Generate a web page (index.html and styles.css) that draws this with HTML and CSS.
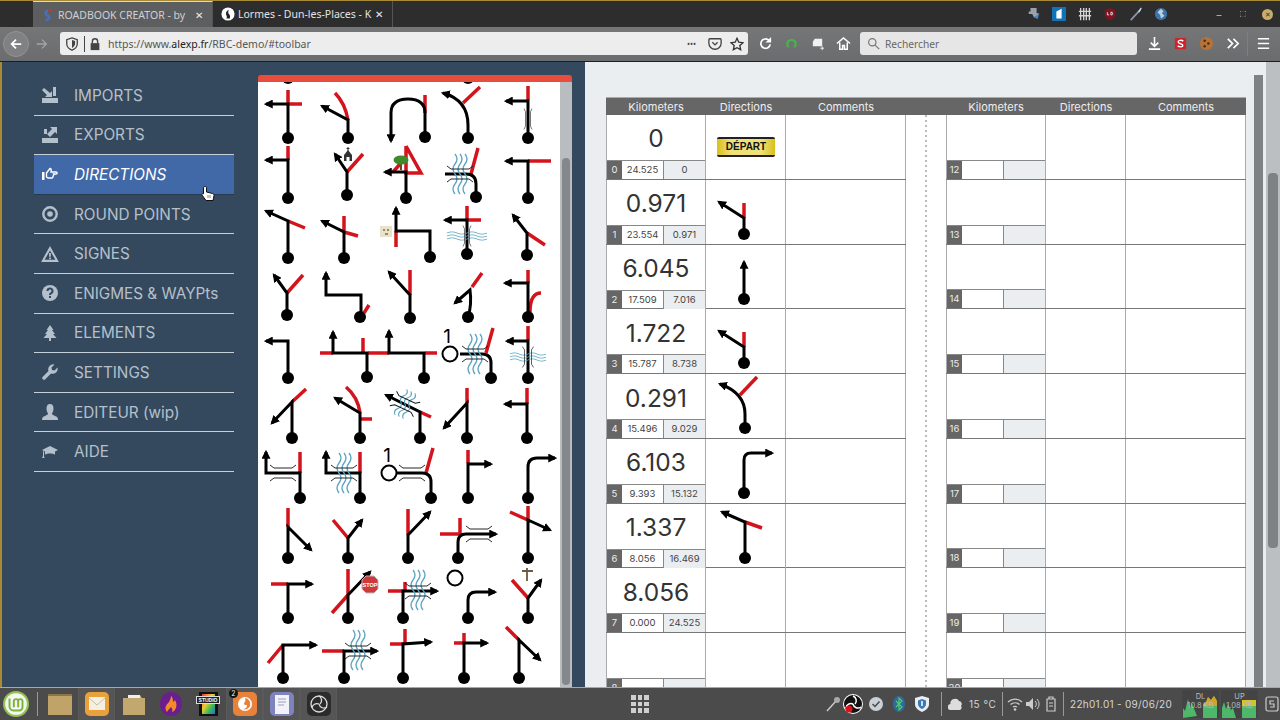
FILE: index.html
```html
<!DOCTYPE html>
<html lang="fr">
<head>
    <meta charset="UTF-8">
    <title>ROADBOOK CREATOR</title>
    <link rel="stylesheet" href="styles.css">
</head>
<body>
<div class="screen">

    <!-- browser window: tabs -->
    <div class="titlebar">
        <div class="tab tab-active">
            <svg class="favicon" viewBox="0 0 16 16"><path d="M8 1h4v3H9z" fill="#c33"/><path d="M8 3c-4 1-3 5 0 6 3 1 2 4-3 5" fill="none" stroke="#4a6fb5" stroke-width="3"/></svg>
            <span class="tab-label">ROADBOOK CREATOR - by</span>
            <span class="tab-close">✕</span>
        </div>
        <div class="tab">
            <svg class="favicon" viewBox="0 0 16 16"><circle cx="8" cy="8" r="7.500" fill="#fff"/><path d="M9 3C6 4 5 7 6 9s1 3 0 4h4c1-2 0-4-1-5s-1-3 0-5z" fill="#222"/></svg>
            <span class="tab-label">Lormes - Dun-les-Places - K</span>
            <span class="tab-close">✕</span>
        </div>
        <div class="ext-icons">
            <svg viewBox="0 0 16 16"><path d="M4 1h7v6h3l-4 5H8L6 8H2V5h2z" fill="#9aa3ad"/><path d="M8 11l6-3-2 6z" fill="#4a86c5"/></svg>
            <svg viewBox="0 0 16 16"><path d="M0 0h16v16H0z" fill="#1272b8"/><path d="M5 5l6-3v11H5z" fill="#fff"/></svg>
            <svg viewBox="0 0 16 16"><path d="M3 1v14M6.500 1v14M9.500 1v14M13 1v14M1 5h14M1 10h14" stroke="#d5d5d5" stroke-width="1.500"/></svg>
            <svg viewBox="0 0 16 16"><path d="M8 1l6 2v6c0 3-3 5-6 6-3-1-6-3-6-6V3z" fill="#7f1420"/><path d="M5 6v3h2M9 6v3h1.500l.5-1.500L10.500 6z" fill="none" stroke="#eee"/></svg>
            <svg viewBox="0 0 16 16"><path d="M2 15L13 3" stroke="#8b95a8" stroke-width="2"/><path d="M11 6l3-5" stroke="#d5d9e0" stroke-width="1.500"/></svg>
            <svg viewBox="0 0 16 16"><circle cx="8" cy="8" r="7" fill="#3f73a8"/><path d="M4 6l4-4 3 3-2 2 3 3-4 3-1-4z" fill="#b9cfe2"/></svg>
        </div>
        <div class="window-btns">
            <span class="win-min"></span>
            <span class="win-max"></span>
            <span class="win-close">✕</span>
        </div>
    </div>

    <!-- browser window: toolbar -->
    <div class="navbar">
        <button class="back-btn"><svg viewBox="0 0 16 16"><path d="M14 8H3M8 3L3 8l5 5" fill="none" stroke="#fff" stroke-width="2"/></svg></button>
        <span class="forward-btn"><svg viewBox="0 0 16 16"><path d="M2 8h11M8 3l5 5-5 5" fill="none" stroke="#a4a5a7" stroke-width="1.500"/></svg></span>
        <div class="urlbar">
            <svg class="url-icon" viewBox="0 0 16 16"><path d="M8 1l6 2v5c0 3-3 6-6 7-3-1-6-4-6-7V3z" fill="none" stroke="#444" stroke-width="1.500"/><path d="M8 3.500l3.500 1v3.500c0 2-2 3.500-3.500 4.500z" fill="#444"/></svg>
            <span class="url-sep"></span>
            <svg class="url-icon" viewBox="0 0 16 16"><path d="M5 7V5a3 3 0 0 1 6 0v2" fill="none" stroke="#444" stroke-width="1.600"/><path d="M3 7h10v8H3z" fill="#444"/></svg>
            <span class="url-text">https://www.<b>alexp.fr</b>/RBC-demo/#toolbar</span>
            <span class="url-dots">•••</span>
            <svg class="url-icon" viewBox="0 0 16 16"><path d="M2 2h12a1 1 0 0 1 1 1v4a7 7 0 0 1-14 0V3a1 1 0 0 1 1-1z" fill="none" stroke="#444" stroke-width="1.500"/><path d="M5 6l3 3 3-3" fill="none" stroke="#444" stroke-width="1.500"/></svg>
            <svg class="url-icon" viewBox="0 0 16 16"><path d="M8 1.500l2 4.500 4.800.5-3.600 3.200 1 4.800L8 12.200 3.800 14.500l1-4.800L1.200 6.500 6 6z" fill="none" stroke="#333" stroke-width="1.500"/></svg>
        </div>
        <span class="nav-icon"><svg viewBox="0 0 16 16"><path d="M13 9a5 5 0 1 1-1.500-4.500L13 6" fill="none" stroke="#fff" stroke-width="1.800"/><path d="M14 1v6H8z" fill="#fff"/></svg></span>
        <span class="nav-icon"><svg viewBox="0 0 16 16"><path d="M5 12a4.500 4.500 0 1 1 6 0" fill="none" stroke="#4caf50" stroke-width="2.500"/></svg></span>
        <span class="nav-icon"><svg viewBox="0 0 16 16"><path d="M5 3h8v8H3V6z" fill="#f1f1f1"/><path d="M13 11v4M11 13h4" stroke="#f1f1f1"/></svg></span>
        <span class="nav-icon"><svg viewBox="0 0 16 16"><path d="M1 8l7-6 7 6M4 7v7h3v-4h2v4h3V7" fill="none" stroke="#fff" stroke-width="1.600"/></svg></span>
        <div class="searchbar">
            <svg viewBox="0 0 16 16"><circle cx="6.500" cy="6.500" r="4.500" fill="none" stroke="#777" stroke-width="1.500"/><path d="M10 10l5 5" stroke="#777" stroke-width="1.500"/></svg>
            <span>Rechercher</span>
        </div>
        <span class="nav-icon"><svg viewBox="0 0 16 16"><path d="M8 1v10M4 7l4 4 4-4M2 14h12" fill="none" stroke="#fff" stroke-width="1.700"/></svg></span>
        <span class="nav-icon"><svg viewBox="0 0 16 16"><path d="M2 2h12v12H2z" fill="#d2232a"/><path d="M11 5.500C9 4 5.500 4.500 5.500 6.500S10.500 8 10.500 10 7 12 5 10.500" fill="none" stroke="#fff" stroke-width="1.500"/></svg></span>
        <span class="nav-icon"><svg viewBox="0 0 16 16"><circle cx="8" cy="8" r="7" fill="#b5733a"/><circle cx="6" cy="5" r="1.300" fill="#4b2a10"/><circle cx="10" cy="8" r="1.300" fill="#4b2a10"/><circle cx="6" cy="11" r="1.300" fill="#4b2a10"/></svg></span>
        <span class="nav-icon"><svg viewBox="0 0 16 16"><path d="M3 3l5 5-5 5M9 3l5 5-5 5" fill="none" stroke="#fff" stroke-width="1.800"/></svg></span>
        <span class="nav-sep"></span>
        <span class="nav-icon"><svg viewBox="0 0 16 16"><path d="M2 3h12M2 8h12M2 13h12" stroke="#fff" stroke-width="1.600"/></svg></span>
    </div>

    <div class="app">
        <!-- menu -->
        <nav class="side-menu">
            <a class="menu-item"><svg viewBox="0 0 16 16"><path d="M0 11h16v5H0z"/><path d="M2 1l6 5 2-2v6H3l2-2-5-5zM11 0h3v9h-3z"/></svg>IMPORTS</a>
            <a class="menu-item"><svg viewBox="0 0 16 16"><path d="M0 11h16v5H0z"/><path d="M15 0v7l-2-2-5 5-3-3 5-5-2-2zM2 2h3v5H2z"/></svg>EXPORTS</a>
            <a class="menu-item active"><svg viewBox="0 0 16 16"><path d="M0 6h2.500v8H0z"/><path d="M4.500 7L8 2.500c1 0 1.500 1 1 3.500h5c1.500 0 1.500 2 0 2h-2.500c.5 1 0 2-.5 2.200.2 1-.5 1.800-1 1.800H6L4.500 11z" fill="none" stroke="currentColor" stroke-width="1.400"/></svg>DIRECTIONS</a>
            <a class="menu-item"><svg viewBox="0 0 16 16"><circle cx="8" cy="8" r="6.700" fill="none" stroke="currentColor" stroke-width="2.400"/><circle cx="8" cy="8" r="2.800"/></svg>ROUND POINTS</a>
            <a class="menu-item"><svg class="wide" viewBox="0 0 20 18"><path fill-rule="evenodd" d="M10 0l10 18H0zM10 5L4 15.500h12zM9 8h2v4H9zM9 13h2v2H9z"/></svg>SIGNES</a>
            <a class="menu-item"><svg viewBox="0 0 16 16"><circle cx="8" cy="8" r="8"/><path d="M5.500 6a2.500 2.500 0 1 1 3.700 2.200c-.8.400-1.200.8-1.200 1.800M8 11v2" fill="none" stroke="#34495e" stroke-width="2"/></svg>ENIGMES &amp; WAYPts</a>
            <a class="menu-item"><svg viewBox="0 0 16 16"><path d="M8 0l3.500 5H10l3 4h-2l3.500 4H9v3H7v-3H1.500L5 9H3l3-4H4.500z"/></svg>ELEMENTS</a>
            <a class="menu-item"><svg viewBox="0 0 16 16"><path d="M15.500 3.500l-3 3-2.500-.5-.5-2.500 3-3a5 5 0 0 0-6 6.500L.8 12.700a1.700 1.700 0 0 0 2.500 2.500L9 9.500a5 5 0 0 0 6.500-6z"/></svg>SETTINGS</a>
            <a class="menu-item"><svg viewBox="0 0 16 16"><path d="M8 0c2.500 0 3.500 2 3.500 4.500S10.500 9 10 9.500c0 1 1 1.500 3 2.500 2 .8 3 1.500 3 4H0c0-2.500 1-3.200 3-4 2-1 3-1.500 3-2.500C5.500 9 4.500 7 4.500 4.500S5.500 0 8 0z"/></svg>EDITEUR (wip)</a>
            <a class="menu-item"><svg viewBox="0 0 16 16"><path d="M8 2L0 6l3 1.500v3c2-1.500 8-1.500 10 0v-3l3-1.500zM1 7v5l-1 2h2.500L2 12V7.500z"/></svg>AIDE</a>
            <svg class="cursor" viewBox="0 0 16 18"><path d="M5 1.500c1 0 1.500.5 1.500 1.500v4l6 1.500c1 .5 1.500 1 1.500 2l-1 5H6L2 10c-.5-1 .5-2 1.500-1.200V3c0-1 .5-1.500 1.500-1.500z" fill="#fff" stroke="#111"/><path d="M8 10v3M10 10v3" stroke="#555" stroke-width=".7"/></svg>
        </nav>

        <!-- direction signs palette -->
        <div class="palette">
            <div class="palette-top"></div>
            <div class="palette-body">
                <svg class="signs" viewBox="258 82 302 605">
                    <defs>
                        <marker id="ah" viewBox="0 0 8 8" refX="6" refY="4" markerWidth="9" markerHeight="9" markerUnits="userSpaceOnUse" orient="auto"><path d="M0 0L8 4L0 8z"/></marker>
                        <g id="waves" class="waves">
                            <path d="M-5-20q4 5 0 10t0 10 0 10 0 10"/>
                            <path d="M0-20q4 5 0 10t0 10 0 10 0 10"/>
                            <path d="M5-20q4 5 0 10t0 10 0 10 0 10"/>
                        </g>
                        <g id="bridge" class="bridge">
                            <path d="M-13-8l4 3H9l4-3M-13 8l4-3H9l4 3"/>
                        </g>
                    </defs>

                    <g class="red">
                        <!-- row 1 -->
                        <path d="M288 90V104H302M335 93Q345 103 348 120M425 95V113M463 103L480 87M528 86V100"/>
                        <!-- row 2 -->
                        <path d="M288 146V160M347 172L363 154M406 146V173H421L406 146M393 172L401 163M471 174L478 148M528 161H551"/>
                        <!-- row 3 -->
                        <path d="M288 221L305 228M344 216V233M344 232L358 236M396 231V247M467 206V220H481M527 233L545 245"/>
                        <!-- row 4 -->
                        <path d="M287 293L303 275M364 313L369 305M410 270V295M472 287L482 273M528 270V283M530 312Q530 293 541 293"/>
                        <!-- row 5 -->
                        <path d="M320 353H333M363 338V353M368 353H389M425 353H437M486 353L493 328M528 326V340"/>
                        <!-- row 6 -->
                        <path d="M292 402L306 389M360 413Q358 397 346 387M360 419H372M420 412L431 417M467 388V403M527 388V404"/>
                        <!-- row 7 -->
                        <path d="M300 452V473M360 452V473M426 473L433 448M468 450V463"/>
                        <!-- row 8 -->
                        <path d="M288 508V527M348 538L333 520M408 509V535M460 518V534H440M528 506V520L510 512"/>
                        <!-- row 9 -->
                        <path d="M288 584H271M348 569V595M348 595L332 613M405 582V592M403 591H388M528 598L512 580"/>
                        <!-- row 10 -->
                        <path d="M283 645L268 663M344 651H322M405 629V644M403 644H390M464 633V643M464 643H454M519 640L506 627"/>
                    </g>

                    <g class="road" marker-end="url(#ah)">
                        <path d="M288 138V104H266"/>
                        <path d="M348 138V120L322 106"/>
                        <path d="M425 137V113Q425 99 408 99Q391 99 391 113V141"/>
                        <path d="M468 138V125Q468 100 443 93"/>
                        <path d="M528 138V101H506"/>

                        <path d="M288 198V160H266"/>
                        <path d="M347 195V172L335 154"/>
                        <path d="M406 198V172H385"/>
                        <path d="M528 198V161H506"/>

                        <path d="M288 258V221L266 211"/>
                        <path d="M344 258V232L322 221"/>
                        <path d="M430 257V231H396V208"/>
                        <path d="M467 254V220H445"/>
                        <path d="M527 255V233L513 215"/>

                        <path d="M287 315V293L274 275"/>
                        <path d="M361 313V295H326V273"/>
                        <path d="M410 318V295L389 272"/>
                        <path d="M468 317Q472 305 470 290L455 303"/>
                        <path d="M528 317V283H505"/>

                        <path d="M288 378V341H266"/>
                        <path d="M367 377V353H333V332"/>
                        <path d="M424 378V353H389V331"/>
                        <path d="M528 378V341H507"/>

                        <path d="M292 438V402L272 423"/>
                        <path d="M360 438V413L335 398"/>
                        <path d="M420 438V412L386 395"/>
                        <path d="M467 438V403L444 428"/>
                        <path d="M527 438V404H505"/>

                        <path d="M300 498V473H266V452"/>
                        <path d="M360 498V473H326V452"/>
                        <path d="M468 498V464H491"/>
                        <path d="M528 498V467Q528 458 537 458H555"/>

                        <path d="M288 558V527L311 550"/>
                        <path d="M348 558V538L362 520"/>
                        <path d="M408 558V535L430 512"/>
                        <path d="M458 558V542Q458 534 466 534H496"/>
                        <path d="M528 558V520L550 530"/>

                        <path d="M288 618V584H312"/>
                        <path d="M348 618V595L370 572"/>
                        <path d="M403 618V591H437"/>
                        <path d="M468 618V600Q468 592 476 592H495"/>
                        <path d="M528 618V598L541 580"/>

                        <path d="M283 678V645H316"/>
                        <path d="M344 678V651H377"/>
                        <path d="M403 678V644L431 642"/>
                        <path d="M464 678V643H487"/>
                        <path d="M519 678V640L540 660"/>
                    </g>

                    <!-- round-about branches, no arrow head -->
                    <g class="road">
                        <path d="M476 197V184Q476 174 466 174H445"/>
                        <path d="M460 354H482Q491 354 491 363V378"/>
                        <path d="M397 473H422Q431 473 431 482V498"/>
                    </g>

                    <g class="round">
                        <circle cx="450" cy="354" r="7.500"/>
                        <circle cx="389" cy="473" r="7.500"/>
                        <circle cx="455" cy="578" r="7.500"/>
                    </g>
                    <text class="round-num" x="447" y="343">1</text>
                    <text class="round-num" x="387" y="462">1</text>

                    <use href="#waves" transform="translate(460 174)"/>
                    <use href="#bridge" transform="translate(460 174)"/>
                    <use href="#waves" transform="translate(467 236) rotate(90) scale(.6 1)"/>
                    <use href="#bridge" transform="translate(467 236) rotate(90) scale(.8 .5)"/>
                    <use href="#bridge" transform="translate(528 119) rotate(90) scale(.8 .5)"/>
                    <use href="#waves" transform="translate(475 354)"/>
                    <use href="#bridge" transform="translate(475 354)"/>
                    <use href="#waves" transform="translate(528 357) rotate(90) scale(.6 .9)"/>
                    <use href="#bridge" transform="translate(528 357) rotate(90) scale(.8 .7)"/>
                    <use href="#waves" transform="translate(405 404) rotate(25) scale(.9 .7)"/>
                    <use href="#bridge" transform="translate(405 404) rotate(25)"/>
                    <use href="#bridge" transform="translate(283 473)"/>
                    <use href="#waves" transform="translate(344 473)"/>
                    <use href="#bridge" transform="translate(344 473)"/>
                    <use href="#bridge" transform="translate(412 473)"/>
                    <use href="#bridge" transform="translate(479 534)"/>
                    <use href="#waves" transform="translate(418 590)"/>
                    <use href="#bridge" transform="translate(418 591)"/>
                    <use href="#waves" transform="translate(358 650)"/>
                    <use href="#bridge" transform="translate(358 651)"/>

                    <g class="dots">
                        <circle cx="288" cy="78" r="6"/><circle cx="468" cy="78" r="6"/>
                        <circle cx="288" cy="138" r="6"/><circle cx="348" cy="138" r="6"/><circle cx="425" cy="137" r="6"/><circle cx="468" cy="138" r="6"/><circle cx="528" cy="138" r="6"/>
                        <circle cx="288" cy="198" r="6"/><circle cx="347" cy="195" r="6"/><circle cx="406" cy="198" r="6"/><circle cx="476" cy="197" r="6"/><circle cx="528" cy="198" r="6"/>
                        <circle cx="288" cy="258" r="6"/><circle cx="344" cy="258" r="6"/><circle cx="430" cy="257" r="6"/><circle cx="467" cy="254" r="6"/><circle cx="527" cy="255" r="6"/>
                        <circle cx="287" cy="315" r="6"/><circle cx="360" cy="317" r="6"/><circle cx="410" cy="318" r="6"/><circle cx="468" cy="317" r="6"/><circle cx="528" cy="317" r="6"/>
                        <circle cx="288" cy="378" r="6"/><circle cx="367" cy="377" r="6"/><circle cx="424" cy="378" r="6"/><circle cx="491" cy="378" r="6"/><circle cx="528" cy="378" r="6"/>
                        <circle cx="292" cy="438" r="6"/><circle cx="360" cy="438" r="6"/><circle cx="420" cy="438" r="6"/><circle cx="467" cy="438" r="6"/><circle cx="527" cy="438" r="6"/>
                        <circle cx="300" cy="498" r="6"/><circle cx="360" cy="498" r="6"/><circle cx="431" cy="498" r="6"/><circle cx="468" cy="498" r="6"/><circle cx="528" cy="498" r="6"/>
                        <circle cx="288" cy="558" r="6"/><circle cx="348" cy="558" r="6"/><circle cx="408" cy="558" r="6"/><circle cx="458" cy="558" r="6"/><circle cx="528" cy="558" r="6"/>
                        <circle cx="288" cy="618" r="6"/><circle cx="348" cy="618" r="6"/><circle cx="403" cy="618" r="6"/><circle cx="468" cy="618" r="6"/><circle cx="528" cy="618" r="6"/>
                        <circle cx="283" cy="678" r="6"/><circle cx="344" cy="678" r="6"/><circle cx="403" cy="678" r="6"/><circle cx="464" cy="678" r="6"/><circle cx="519" cy="678" r="6"/>
                    </g>

                    <!-- little pictures next to some signs -->
                    <path d="M348 150l4 5v6h-8v-6z" fill="#333"/>
                    <path d="M348 147v4M346.500 148.500h3" stroke="#333"/>
                    <path d="M346.500 157h3v4h-3z" fill="#fff"/>
                    <path d="M400 164h2v6h-2z" fill="#6d4a22"/>
                    <ellipse cx="401" cy="160" rx="7.500" ry="4.500" fill="#3f8a2a"/>
                    <path d="M380 226h12v11h-12z" fill="#e8e2cc"/>
                    <path d="M383 229h2v2h-2zM387 229h2v2h-2zM385 233h3v2h-3z" fill="#a08c5a"/>
                    <path d="M366 576h8l4 4v9l-4 4h-8l-4-4v-9z" fill="#d0393b" stroke="#bbb"/>
                    <text class="stop" x="370" y="587">STOP</text>
                    <path d="M527 568v13M522 571h11" stroke="#6d5a40" stroke-width="1.800"/>
                </svg>
                <div class="fake-scroll"><div class="fake-thumb"></div></div>
            </div>
        </div>

        <!-- roadbook sheet -->
        <div class="sheet">
            <div class="sheet-page">
                <div class="sheet-head">
                    <span>Kilometers</span><span>Directions</span><span>Comments</span><span></span>
                    <span>Kilometers</span><span>Directions</span><span>Comments</span>
                </div>
                <div class="sheet-body">
                    <div class="road-table">
                        <div class="road-row">
                            <div class="km"><div class="km-value">0</div><div class="km-sub"><span class="km-index">0</span><span>24.525</span><span class="km-total">0</span></div></div>
                            <div class="dir"><div class="depart">DÉPART</div></div>
                            <div class="comment"></div>
                        </div>
                        <div class="road-row">
                            <div class="km"><div class="km-value">0.971</div><div class="km-sub"><span class="km-index">1</span><span>23.554</span><span class="km-total">0.971</span></div></div>
                            <div class="dir"><svg viewBox="0 0 80 64"><path class="red" d="M38 23V38"/><path class="road" marker-end="url(#ah)" d="M38 54V38L13 22"/><circle cx="38" cy="54" r="6"/></svg></div>
                            <div class="comment"></div>
                        </div>
                        <div class="road-row">
                            <div class="km"><div class="km-value">6.045</div><div class="km-sub"><span class="km-index">2</span><span>17.509</span><span class="km-total">7.016</span></div></div>
                            <div class="dir"><svg viewBox="0 0 80 64"><path class="road" marker-end="url(#ah)" d="M38 54V17"/><circle cx="38" cy="54" r="6"/></svg></div>
                            <div class="comment"></div>
                        </div>
                        <div class="road-row">
                            <div class="km"><div class="km-value">1.722</div><div class="km-sub"><span class="km-index">3</span><span>15.787</span><span class="km-total">8.738</span></div></div>
                            <div class="dir"><svg viewBox="0 0 80 64"><path class="red" d="M38 23V38"/><path class="road" marker-end="url(#ah)" d="M38 54V38L13 22"/><circle cx="38" cy="54" r="6"/></svg></div>
                            <div class="comment"></div>
                        </div>
                        <div class="road-row">
                            <div class="km"><div class="km-value">0.291</div><div class="km-sub"><span class="km-index">4</span><span>15.496</span><span class="km-total">9.029</span></div></div>
                            <div class="dir"><svg viewBox="0 0 80 64"><path class="red" d="M34 21L51 3"/><path class="road" marker-end="url(#ah)" d="M39 54V40Q39 19 14 10"/><circle cx="39" cy="54" r="6"/></svg></div>
                            <div class="comment"></div>
                        </div>
                        <div class="road-row">
                            <div class="km"><div class="km-value">6.103</div><div class="km-sub"><span class="km-index">5</span><span>9.393</span><span class="km-total">15.132</span></div></div>
                            <div class="dir"><svg viewBox="0 0 80 64"><path class="road" marker-end="url(#ah)" d="M38 54V21Q38 14 45 14H66"/><circle cx="38" cy="54" r="6"/></svg></div>
                            <div class="comment"></div>
                        </div>
                        <div class="road-row">
                            <div class="km"><div class="km-value">1.337</div><div class="km-sub"><span class="km-index">6</span><span>8.056</span><span class="km-total">16.469</span></div></div>
                            <div class="dir"><svg viewBox="0 0 80 64"><path class="red" d="M39 18L56 24"/><path class="road" marker-end="url(#ah)" d="M39 54V18L16 8"/><circle cx="39" cy="54" r="6"/></svg></div>
                            <div class="comment"></div>
                        </div>
                        <div class="road-row">
                            <div class="km"><div class="km-value">8.056</div><div class="km-sub"><span class="km-index">7</span><span>0.000</span><span class="km-total">24.525</span></div></div>
                            <div class="dir"></div>
                            <div class="comment"></div>
                        </div>
                        <div class="road-row">
                            <div class="km"><div class="km-value"></div><div class="km-sub"><span class="km-index">8</span><span></span><span class="km-total"></span></div></div>
                            <div class="dir"></div>
                            <div class="comment"></div>
                        </div>
                    </div>
                    <div class="fold"></div>
                    <div class="road-table">
                        <div class="road-row"><div class="km"><div class="km-value"></div><div class="km-sub"><span class="km-index">12</span><span></span><span class="km-total"></span></div></div><div class="dir"></div><div class="comment"></div></div>
                        <div class="road-row"><div class="km"><div class="km-value"></div><div class="km-sub"><span class="km-index">13</span><span></span><span class="km-total"></span></div></div><div class="dir"></div><div class="comment"></div></div>
                        <div class="road-row"><div class="km"><div class="km-value"></div><div class="km-sub"><span class="km-index">14</span><span></span><span class="km-total"></span></div></div><div class="dir"></div><div class="comment"></div></div>
                        <div class="road-row"><div class="km"><div class="km-value"></div><div class="km-sub"><span class="km-index">15</span><span></span><span class="km-total"></span></div></div><div class="dir"></div><div class="comment"></div></div>
                        <div class="road-row"><div class="km"><div class="km-value"></div><div class="km-sub"><span class="km-index">16</span><span></span><span class="km-total"></span></div></div><div class="dir"></div><div class="comment"></div></div>
                        <div class="road-row"><div class="km"><div class="km-value"></div><div class="km-sub"><span class="km-index">17</span><span></span><span class="km-total"></span></div></div><div class="dir"></div><div class="comment"></div></div>
                        <div class="road-row"><div class="km"><div class="km-value"></div><div class="km-sub"><span class="km-index">18</span><span></span><span class="km-total"></span></div></div><div class="dir"></div><div class="comment"></div></div>
                        <div class="road-row"><div class="km"><div class="km-value"></div><div class="km-sub"><span class="km-index">19</span><span></span><span class="km-total"></span></div></div><div class="dir"></div><div class="comment"></div></div>
                        <div class="road-row"><div class="km"><div class="km-value"></div><div class="km-sub"><span class="km-index">20</span><span></span><span class="km-total"></span></div></div><div class="dir"></div><div class="comment"></div></div>
                    </div>
                </div>
            </div>
            <div class="sheet-scroll"></div>
            <div class="page-scroll"><div class="page-thumb"></div></div>
        </div>
    </div>

    <!-- desktop panel -->
    <div class="taskbar">
        <span class="mint"><svg viewBox="0 0 24 24"><circle cx="12" cy="12" r="12" fill="#8fc450"/><circle cx="12" cy="12" r="10" fill="#f4f6ef"/><path d="M6 7v7a4 4 0 0 0 4 4h5a3 3 0 0 0 3-3V9.500a2 2 0 0 0-4 0V15M10 15V9.500a2 2 0 0 1 4 0" fill="none" stroke="#7bb33d" stroke-width="1.800"/></svg></span>
        <span class="dock-sep"></span>
        <span class="dock-item"><svg viewBox="0 0 24 24"><path d="M0 2h24v21H0z" fill="#bfa368"/><path d="M0 2h24v2H0z" fill="#8c7647"/></svg></span>
        <span class="dock-item open"><svg viewBox="0 0 24 24"><rect width="24" height="24" rx="5" fill="#e9a13b"/><path d="M4 5h16v13H4z" fill="#f5efe2"/><path d="M4 6l8 7 8-7" fill="none" stroke="#c9bda5"/></svg></span>
        <span class="dock-item"><svg viewBox="0 0 24 24"><path d="M1 6h9l2-3h6l2 3h3v17H1z" fill="#c2a76e"/><path d="M6 3h12v3H6z" fill="#eee"/></svg></span>
        <span class="dock-item"><svg viewBox="0 0 24 24"><ellipse cx="12" cy="12" rx="11" ry="12" fill="#6b1f8f"/><path d="M8 20c-3-4-1-7 2-10 1-2 2-4 2-6 3 3 1 5 3 6 0-1 1-2 1-2 3 5 1 11-3 12 1-2 0-4-1-5-1 1-3 3-4 5z" fill="#f58a2c"/></svg></span>
        <span class="dock-item"><svg viewBox="0 0 24 24"><defs><linearGradient id="rainbow" x1="0" y1="0" x2="1" y2="1"><stop offset="0" stop-color="#e33"/><stop offset=".4" stop-color="#ec3"/><stop offset=".7" stop-color="#3b5"/><stop offset="1" stop-color="#36d"/></linearGradient></defs><path d="M3 0h19v24H3z" fill="#111"/><path d="M6 2h13v20H6z" fill="url(#rainbow)"/><path d="M0 4h24v8H0z" fill="#ddd"/><path d="M1 5h22v6H1z" fill="#222"/><text class="film-label" x="12" y="10">STUDIO</text></svg></span>
        <span class="dock-item open"><i class="dock-badge">2</i><svg viewBox="0 0 24 24"><rect width="24" height="24" rx="5" fill="#e8823a"/><circle cx="12" cy="12" r="7" fill="#fff"/><path d="M12 6a6 6 0 0 1 5 8c-1 3-5 4-7 3 3 0 4-2 4-4-2 0-3 0-3-2 1-1 2-2 1-5z" fill="#e8823a"/></svg></span>
        <span class="dock-item open"><svg viewBox="0 0 24 24"><rect width="24" height="24" rx="5" fill="#7f83bd"/><path d="M5 3h14v19H5z" fill="#f2f3fa"/><path d="M8 7h8M8 10h8M8 13h6" stroke="#9a9dbb"/></svg></span>
        <span class="dock-item open"><svg viewBox="0 0 24 24"><rect width="24" height="24" rx="5" fill="#2b2b2b"/><circle cx="12" cy="12" r="8" fill="none" stroke="#ddd" stroke-width="1.300"/><path d="M12 4a5 5 0 0 1 1 8M20 15a5 5 0 0 1-8-3M5 16a5 5 0 0 1 7-4" fill="none" stroke="#ddd" stroke-width="1.300"/></svg></span>

        <span class="apps-grid"><i></i><i></i><i></i><i></i><i></i><i></i><i></i><i></i><i></i></span>

        <div class="tray">
            <span class="tray-icon tray-pen"><svg viewBox="0 0 16 16"><path d="M2 15L11 5" stroke="#c9c9c9" stroke-width="1.500"/><circle cx="12" cy="4" r="3" fill="#a9a9a9"/></svg></span>
            <span class="tray-icon tray-obs"><svg viewBox="0 0 20 20"><circle cx="10" cy="10" r="10" fill="#fff"/><circle cx="10" cy="10" r="9" fill="#111"/><path d="M10 2a5 5 0 0 1 2 8M18 13a5 5 0 0 1-8-3M3 14a5 5 0 0 1 7-4" fill="none" stroke="#fff" stroke-width="1.500"/><circle cx="6" cy="15" r="3.500" fill="#e0111a"/></svg></span>
            <span class="tray-icon"><svg viewBox="0 0 16 16"><circle cx="8" cy="8" r="7" fill="#c8d0d8"/><path d="M4.500 8l2.500 2.500 4.500-5" fill="none" stroke="#4a4a4a" stroke-width="1.500"/></svg></span>
            <span class="tray-icon"><svg viewBox="0 0 16 16"><ellipse cx="8" cy="8" rx="6" ry="8" fill="#31699b"/><path d="M5 5l6 6-3 3V2l3 3-6 6" fill="none" stroke="#4fd16d" stroke-width="1.100"/></svg></span>
            <span class="tray-icon tray-shield"><svg viewBox="0 0 16 16"><path d="M8 0l7 2v6c0 4-3 6-7 8-4-2-7-4-7-8V2z" fill="#e8eef4"/><path d="M8 3l4 1.500v3.500c0 2.500-2 4-4 5-2-1-4-2.500-4-5V4.500z" fill="#3c78b5"/><path d="M8 5v5" stroke="#fff" stroke-width="1.500"/></svg></span>
            <span class="tray-sep"></span>
            <span class="tray-icon tray-cloud"><svg viewBox="0 0 16 16"><path d="M3 14a3 3 0 0 1-.5-6A4 4 0 0 1 6 3a4 4 0 0 1 5 2 3 3 0 0 1 2 5 2.500 2.500 0 0 1-1 4z" fill="#ddd"/></svg></span>
            <span class="tray-temp">15 °C</span>
            <span class="tray-sep"></span>
            <span class="tray-icon tray-small"><svg viewBox="0 0 16 16"><path d="M1 6a10 10 0 0 1 14 0M3.500 8.500a7 7 0 0 1 9 0M6 11a3.500 3.500 0 0 1 4 0" fill="none" stroke="#ccc" stroke-width="1.300"/><circle cx="8" cy="13.500" r="1.300" fill="#ccc"/></svg></span>
            <span class="tray-icon tray-small"><svg viewBox="0 0 16 16"><path d="M1 6h3l4-4v12l-4-4H1z" fill="#ccc"/><path d="M10 5a4 4 0 0 1 0 6M12 3a7 7 0 0 1 0 10" fill="none" stroke="#ccc"/></svg></span>
            <span class="tray-icon tray-small"><svg viewBox="0 0 16 16"><path d="M4 3h8v12H4zM6 1h4v2H6z" fill="none" stroke="#ccc" stroke-width="1.200"/><path d="M6 7h4M6 10h4" stroke="#ccc"/></svg></span>
            <span class="tray-sep"></span>
            <span class="clock">22h01.01 - 09/06/20</span>
            <div class="net-graph">
                <svg viewBox="0 0 37 28"><path d="M1 28V18l2 3 3-12 2 9 2-5 3 8 2 5zM21 28V14l3-2 2-5 3 3 3-4 3 5v17z" fill="#4fb76a"/><path d="M21 14l3-2 2-5 3 3 3-4 3 5v5H21z" fill="#d5a22c"/></svg>
                <span class="net-label">DL<br>10.8 KB</span>
            </div>
            <div class="net-graph">
                <svg viewBox="0 0 37 28"><path d="M1 28V18l2-6 2 7 2-5 3 6 2-2 3 10zM21 28V10h14v18z" fill="#4fb76a"/><path d="M21 10h14v6H21z" fill="#d5c22c"/></svg>
                <span class="net-label">UP<br>1.08 KB</span>
            </div>
            <span class="tray-icon tray-last"><svg viewBox="0 0 16 16"><rect x="2" y="1" width="12" height="14" rx="2" fill="none" stroke="#ccc" stroke-width="1.200"/><path d="M10 5H6v3h4v3H6" fill="none" stroke="#ccc" stroke-width="1.200"/></svg></span>
        </div>
    </div>
</div>
</body>
</html>
```

FILE: styles.css
```css
* {
    box-sizing: border-box;
}
body {
    margin: 0;
    font-family: "Inter", "Liberation Sans", sans-serif;
    background: #333;
}
svg {
    display: block;
}
.screen {
    width: 1280px;
    height: 720px;
    display: flex;
    flex-direction: column;
    overflow: hidden;
}

/* tabs */
.titlebar {
    height: 27px;
    flex: none;
    display: flex;
    align-items: stretch;
    padding-left: 33px;
    background: #2d2d2e;
    border-top: 1px solid #a98b33;
}
.tab {
    width: 180px;
    display: flex;
    align-items: center;
    padding: 0 9px 0 8px;
    gap: 3px;
    color: #e4e4e4;
    font-family: "Noto Sans", sans-serif;
    font-size: 10.500px;
    border-right: 1px solid #555;
    overflow: hidden;
}
.tab-active {
    background: #5d5e60;
    color: #cfd0d1;
    border-top: 1px solid #d8d8d8;
}
.favicon {
    width: 14px;
    height: 14px;
    flex: none;
}
.tab-label {
    flex: 1;
    white-space: nowrap;
    overflow: hidden;
}
.tab-close {
    flex: none;
    font-size: 10px;
    color: #eee;
}
.ext-icons {
    margin-left: auto;
    display: flex;
    align-items: center;
    gap: 11.500px;
    margin-right: 46px;
}
.ext-icons svg {
    width: 14px;
    height: 14px;
}
.window-btns {
    display: flex;
    align-items: center;
    gap: 14px;
    margin-right: 7px;
}
.window-btns span {
    width: 10px;
    height: 10px;
}
.win-min {
    border-bottom: 1px solid #aaa;
    transform: translateY(-3px) scaleX(.5);
}
.win-max {
    border: 1px dotted #888;
    transform: scale(.6);
}
.window-btns .win-close {
    width: 11px;
    height: 11px;
    border-radius: 50%;
    background: #c8ad6b;
    color: #333;
    font-size: 7px;
    line-height: 11px;
    text-align: center;
}

/* browser toolbar */
.navbar {
    height: 35px;
    flex: none;
    display: flex;
    align-items: center;
    padding: 0 3px 1px 3px;
    background: linear-gradient(#757678, #6b6c6e);
    border-bottom: 1px solid #1d1d1d;
}
.back-btn {
    width: 26px;
    height: 26px;
    padding: 5px;
    border-radius: 50%;
    border: 1px solid #939495;
    background: #808183;
}
.back-btn svg {
    width: 14px;
    height: 14px;
}
.forward-btn {
    width: 26px;
    padding: 0 6px;
}
.forward-btn svg {
    width: 14px;
    height: 14px;
}
.urlbar {
    width: 688px;
    height: 23px;
    margin-left: 5px;
    margin-right: 4px;
    display: flex;
    align-items: center;
    gap: 8px;
    padding: 0 4px 0 5px;
    background: #ededed;
    border-radius: 3px;
    font-family: "Noto Sans", sans-serif;
    font-size: 10.500px;
    color: #555;
}
.url-icon {
    width: 14px;
    height: 14px;
    flex: none;
}
.url-sep {
    width: 1px;
    height: 16px;
    background: #444;
    margin: 0 -5px 0 -3px;
}
.url-text {
    flex: 1;
    margin-left: -2px;
}
.url-text b {
    color: #222;
    font-weight: 400;
}
.url-dots {
    font-size: 8px;
    margin-right: 4px;
    color: #444;
}
.nav-icon {
    width: 26px;
    flex: none;
    display: flex;
    justify-content: center;
}
.nav-icon svg {
    width: 15px;
    height: 15px;
}
.nav-sep {
    width: 1px;
    height: 24px;
    background: #7e7f81;
    margin: 0 2px;
}
.searchbar {
    width: 277px;
    height: 23px;
    flex: none;
    margin: 0 4px 0 4px;
    display: flex;
    align-items: center;
    gap: 5px;
    padding-left: 7px;
    background: #e6e6e6;
    border-radius: 3px;
    font-family: "Noto Sans", sans-serif;
    font-size: 10.200px;
    color: #666;
}
.searchbar svg {
    width: 13px;
    height: 13px;
}

/* page */
.app {
    flex: 1;
    min-height: 0;
    display: flex;
    background: #34495e;
    border-left: 2px solid #a98b33;
}
.side-menu {
    width: 256px;
    flex: none;
    position: relative;
    padding: 14px 24px 0 32px;
}
.menu-item {
    height: 39.600px;
    display: flex;
    align-items: center;
    padding-left: 8px;
    gap: 16px;
    color: #b4c0cc;
    font-size: 15.300px;
    border-bottom: 1px solid #c6d0d9;
}
.menu-item svg {
    width: 16px;
    height: 16px;
    flex: none;
    fill: currentColor;
}
.menu-item svg.wide {
    width: 20px;
    margin: 0 -2px;
}
.menu-item.active {
    background: #4169a8;
    border-bottom: 1px solid #263a50;
    color: #fff;
    font-style: italic;
}
.cursor {
    position: absolute;
    left: 198px;
    top: 123px;
    width: 16px;
    height: 18px;
}

.palette {
    width: 314px;
    flex: none;
    margin: 13px 13px 0 0;
    display: flex;
    flex-direction: column;
}
.palette-top {
    height: 7px;
    flex: none;
    background: #e74c3c;
    border-radius: 3px 3px 0 0;
}
.palette-body {
    flex: 1;
    min-height: 0;
    display: flex;
    background: #fff;
}
.signs {
    width: 302px;
    height: 605px;
    flex: none;
}
.signs circle,
.dir circle {
    fill: #000;
}
.red {
    fill: none;
    stroke: #d3141c;
    stroke-width: 3.500;
}
.road {
    fill: none;
    stroke: #000;
    stroke-width: 3;
}
.dots circle {
    fill: #000;
}
.signs .round circle {
    fill: #fff;
    stroke: #000;
    stroke-width: 2;
}
.round-num {
    fill: #000;
    font-family: "Inter", sans-serif;
    font-size: 19px;
    text-anchor: middle;
}
.stop {
    fill: #fff;
    font-family: "Liberation Sans", sans-serif;
    font-size: 5.500px;
    font-weight: bold;
    text-anchor: middle;
}
.waves path {
    fill: none;
    stroke: #5ca5c0;
    stroke-width: 1.300;
}
.bridge path {
    fill: none;
    stroke: #111;
    stroke-width: .9;
}
.fake-scroll {
    width: 12px;
    flex: none;
    display: flex;
    padding: 76px 2px 2px 2px;
    background: #babdbf;
}
.fake-thumb {
    flex: 1;
    background: #85888b;
    border-radius: 4px;
}

/* roadbook sheet */
.sheet {
    flex: 1;
    min-width: 0;
    display: flex;
    background: #ebeef0;
    padding-left: 21px;
}
.sheet-page {
    width: 640px;
    flex: none;
    padding-top: 35px;
    overflow: hidden;
}
.sheet-head {
    height: 18px;
    display: grid;
    grid-template-columns: 100px 80px 120px 40px 100px 80px 120px;
    align-items: center;
    text-align: center;
    background: #666;
    border-top: 1px solid #aaa;
    color: #eee;
    font-size: 11px;
}
.sheet-body {
    display: flex;
    background: #fff;
}
.road-table {
    width: 300px;
    flex: none;
}
.fold {
    width: 40px;
    flex: none;
    background: linear-gradient(#bbb 50%, transparent 50%) 19px 0 / 2px 5px repeat-y;
}
.road-row {
    height: 64.750px;
    display: grid;
    grid-template-columns: 100px 80px 120px;
    border-bottom: 1px solid #777;
}
.km,
.dir,
.comment {
    border-right: 1px solid #aaa;
}
.road-table .road-row .km {
    border-left: 1px solid #aaa;
}
.km {
    display: flex;
    flex-direction: column;
}
.km-value {
    flex: 1;
    display: flex;
    align-items: center;
    justify-content: center;
    padding-top: 2px;
    color: #333;
    font-size: 24.500px;
}
.km-sub {
    height: 19px;
    flex: none;
    display: grid;
    grid-template-columns: 15px 41px 1fr;
    border-top: 1px solid #888;
    text-align: center;
    color: #444;
    font-size: 9.500px;
    line-height: 18px;
}
.km-index {
    background: #666;
    color: #eee;
}
.km-total {
    background: #ebeef0;
    border-left: 1px solid #888;
}
.dir svg {
    width: 80px;
    height: 64px;
}
.depart {
    width: 58px;
    height: 20px;
    margin: 22px 0 0 11px;
    background: linear-gradient(90deg, #d9c01c, #f0e27a 25%, #f0e27a 75%, #d9c01c);
    border-top: 2px solid #222;
    border-bottom: 2px solid #222;
    border-radius: 2px;
    color: #111;
    font-family: "Liberation Sans", sans-serif;
    font-size: 10px;
    font-weight: bold;
    line-height: 16px;
    text-align: center;
}
.sheet-scroll {
    width: 9px;
    flex: none;
    margin: 13px 0 0 8px;
    background: #7e8285;
}
.page-scroll {
    width: 14px;
    flex: none;
    margin-left: 3px;
    padding: 111px 2px 139px 2px;
    background: #bcbfc0;
    display: flex;
}
.page-thumb {
    flex: 1;
    border-radius: 4px;
    background: #7e8285;
}

/* desktop panel */
.taskbar {
    height: 33px;
    flex: none;
    display: flex;
    align-items: center;
    background: #4b4b4b;
    border-top: 1px solid #c2a95e;
}
.mint {
    width: 26px;
    height: 26px;
    margin-left: 3px;
}
.dock-sep {
    width: 1px;
    height: 24px;
    background: #999;
    margin: 0 3px 0 8px;
}
.dock-item {
    width: 37px;
    height: 32px;
    flex: none;
    position: relative;
    display: flex;
    align-items: center;
    justify-content: center;
}
.dock-item.open {
    background: rgba(255, 255, 255, .06);
    border: 1px solid #5a5a5a;
    border-width: 0 1px;
}
.dock-item svg {
    width: 24px;
    height: 24px;
}
.film-label {
    fill: #fff;
    font-family: "Liberation Sans", sans-serif;
    font-size: 5px;
    font-weight: bold;
    text-anchor: middle;
}
.dock-badge {
    position: absolute;
    left: 2px;
    top: 1px;
    width: 9px;
    height: 9px;
    border-radius: 50%;
    background: #111;
    color: #eee;
    font-size: 7px;
    font-style: normal;
    line-height: 9px;
    text-align: center;
}
.apps-grid {
    width: 18px;
    height: 18px;
    margin-left: 294px;
    display: grid;
    grid-template-columns: repeat(3, 1fr);
    gap: 2px;
}
.apps-grid i {
    background: #cfcfcf;
}
.tray {
    margin-left: auto;
    display: flex;
    align-items: center;
    color: #d5d5d5;
}
.tray-icon {
    width: 23px;
    flex: none;
    display: flex;
    justify-content: center;
}
.tray-icon svg {
    width: 16px;
    height: 16px;
}
.tray-pen {
    width: 21px;
}
.tray-obs {
    width: 19px;
    margin-right: 2px;
}
.tray-obs svg {
    width: 20px;
    height: 20px;
    flex: none;
}
.tray-shield {
    margin-right: 4.500px;
}
.tray-sep {
    width: 1px;
    height: 24px;
    flex: none;
    background: #999;
    margin: 0 3px;
}
.tray-cloud {
    width: 18px;
    margin-left: 2px;
}
.tray-temp {
    width: 30px;
    margin-left: 4px;
    font-size: 10px;
    letter-spacing: .5px;
}
.tray-small {
    width: 18px;
}
.clock {
    width: 110px;
    margin-left: 3px;
    font-size: 10px;
    letter-spacing: .3px;
    white-space: nowrap;
}
.net-graph {
    width: 37px;
    height: 28px;
    flex: none;
    margin-left: 2px;
    position: relative;
    background: #444;
}
.net-label {
    position: absolute;
    top: 2px;
    left: 0;
    right: 0;
    color: #bbb;
    font-size: 7.500px;
    line-height: 9px;
    text-align: center;
    white-space: nowrap;
}
.net-graph svg {
    width: 37px;
    height: 28px;
}
.tray-last {
    width: 16px;
    margin-left: 6px;
}
```
